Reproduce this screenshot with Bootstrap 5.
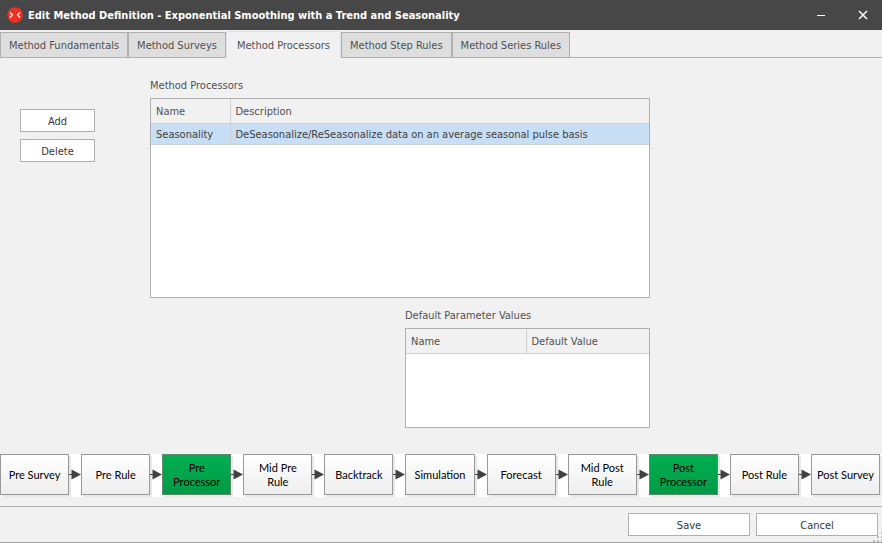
<!DOCTYPE html>
<html lang="en">
<head>
<meta charset="utf-8">
<meta name="viewport" content="width=device-width, initial-scale=1">
<title>Edit Method Definition</title>
<link href="https://cdn.jsdelivr.net/npm/bootstrap@5.3.0/dist/css/bootstrap.min.css" rel="stylesheet">
<style>
  :root { --line: #b0b0b0; --soft-line: #d0d0d0; --surface: #f1f1f1; }
  body { font: 11px/16px "DejaVu Sans Condensed", "DejaVu Sans", sans-serif; color: #505050; background: var(--surface); }
  .title-bar { background: #474747; color: #fff; height: 30px; padding-left: 7px; }
  .title-bar h1 { font-size: 11px; line-height: 16px; font-weight: 700; padding: 2px 0 0 5px; }
  .win-buttons { gap: 4px; }
  .win-btn { width: 38px; height: 30px; background: none; color: #fff; }
  .nav-tabs.method-tabs { --bs-nav-tabs-border-width: 0; padding-top: 1px; box-shadow: inset 0 -1px var(--line); }
  .method-tabs .nav-link { padding: 2px 8px 0; height: 26px; font-size: 11px; line-height: 16px; color: #505050; background: #dedede; border: 1px solid var(--line); border-radius: 0; margin: 0; }
  .method-tabs .nav-link.active { padding: 2px 10px 0; height: 27px; background: var(--surface); border-bottom-color: var(--surface); color: #505050; }
  .side-actions { width: 150px; padding: 31px 55px 0 20px; gap: 7px; }
  .flat-btn { height: 23px; padding: 2px 0 0; font-size: 11px; line-height: 16px; background: #fff; border: 1px solid var(--line); border-radius: 0; color: #383838; }
  .flat-btn:hover { background: #e8f1fa; }
  .work-area { padding-top: 20px; padding-bottom: 26px; }
  .grids { max-width: 500px; }
  .grid-title { font-size: 11px; line-height: 16px; font-weight: 400; margin-bottom: 4px; }
  .grid-box { background: #fff; border: 1px solid var(--line); height: 200px; }
  .grid-box.short { height: 100px; }
  .param-block { width: 245px; margin-top: 10px; }
  .data-grid { table-layout: fixed; --bs-table-color: #505050; --bs-table-bg: transparent; }
  .data-grid th, .data-grid td { font-weight: 400; padding: 2px 5px 0; border-bottom: 1px solid var(--soft-line); color: #505050; }
  .data-grid th { height: 24px; background: var(--surface); }
  .data-grid td { height: 21px; background: #c8def5; color: #404040; }
  .data-grid tr > :first-child { border-right: 1px solid var(--soft-line); }
  .name-col { width: 79px; }
  .param-col { width: 120px; }
  .flow-strip { background: #fff; height: 43px; padding-right: 2px; font: 11px/14px Lato, sans-serif; color: #000; }
  .flow-step { flex: 1 1 0; min-width: 0; height: 41px; border: 1px solid #999; background: linear-gradient(#fff, #eee); box-shadow: 2px 2px 0 #e8e8e8; }
  .flow-step.on { background: linear-gradient(#00b050, #009a46); border-color: #5f8a6e; }
  .flow-arrow { width: 12px; height: 41px; flex: none; position: relative; }
  .footer-bar { margin-top: 9px; border-top: 1px solid var(--line); border-bottom: 1px solid #a0a0a0; padding: 6px 4px 6px 0; gap: 6px; position: relative; }
  .footer-bar .flat-btn { width: 122px; }
  .grip { position: absolute; right: 0; bottom: 0; }
</style>
</head>
<body class="d-flex flex-column min-vh-100">
<header class="title-bar d-flex align-items-center">
  <svg width="16" height="16" viewBox="0 0 16 16" aria-hidden="true"><circle cx="8" cy="8" r="7.8" fill="#ee3124"/><path d="M3 5.500 5.500 8 3 10.500M13 5.500 10.500 8 13 10.500" fill="none" stroke="#fff" stroke-width="1.200"/></svg>
  <h1 class="m-0 flex-grow-1 text-truncate">Edit Method Definition - Exponential Smoothing with a Trend and Seasonality</h1>
  <div class="win-buttons d-flex">
    <button type="button" class="win-btn border-0 p-0 d-flex align-items-center justify-content-center" aria-label="Minimize"><svg width="8" height="8" viewBox="0 0 8 8"><path d="M0 4.500H8" stroke="#fff"/></svg></button>
    <button type="button" class="win-btn border-0 p-0 d-flex align-items-center justify-content-center" aria-label="Close"><svg width="10" height="10" viewBox="0 0 10 10"><path d="M1 1 9 9M9 1 1 9" stroke="#fff" stroke-width="1.500"/></svg></button>
  </div>
</header>
<nav class="nav nav-tabs method-tabs align-items-end" aria-label="Method sections">
  <a class="nav-link d-flex align-items-center" href="#fundamentals">Method Fundamentals</a>
  <a class="nav-link d-flex align-items-center" href="#surveys">Method Surveys</a>
  <a class="nav-link active d-flex align-items-center" href="#processors" aria-current="page">Method Processors</a>
  <a class="nav-link d-flex align-items-center" href="#steps">Method Step Rules</a>
  <a class="nav-link d-flex align-items-center" href="#series">Method Series Rules</a>
</nav>
<main class="flex-grow-1 d-flex flex-column" id="processors">
  <div class="work-area d-flex flex-grow-1">
    <div class="side-actions d-flex flex-column flex-shrink-0">
      <button type="button" class="btn flat-btn">Add</button>
      <button type="button" class="btn flat-btn">Delete</button>
    </div>
    <div class="grids flex-grow-1">
      <h2 class="grid-title" id="proc-title">Method Processors</h2>
      <div class="grid-box">
        <table class="table data-grid m-0" aria-labelledby="proc-title">
          <thead><tr><th class="name-col align-middle" scope="col">Name</th><th class="align-middle" scope="col">Description</th></tr></thead>
          <tbody><tr><td class="align-middle">Seasonality</td><td class="align-middle">DeSeasonalize/ReSeasonalize data on an average seasonal pulse basis</td></tr></tbody>
        </table>
      </div>
      <div class="param-block ms-auto">
        <h2 class="grid-title" id="param-title">Default Parameter Values</h2>
        <div class="grid-box short">
          <table class="table data-grid m-0" aria-labelledby="param-title">
            <thead><tr><th class="param-col align-middle" scope="col">Name</th><th class="align-middle" scope="col">Default Value</th></tr></thead>
          </table>
        </div>
      </div>
    </div>
  </div>
  <svg class="d-none"><symbol id="arrow" viewBox="0 0 12 41"><path d="M0 20.500H5" stroke="#404040"/><path d="M2.500 15.500 12 20.500 2.500 25.500Z" fill="#404040"/></symbol></svg>
  <div class="flow-strip d-flex text-center">
    <div class="flow-step d-flex align-items-center justify-content-center">Pre Survey</div>
    <svg class="flow-arrow"><use href="#arrow"/></svg>
    <div class="flow-step d-flex align-items-center justify-content-center">Pre Rule</div>
    <svg class="flow-arrow"><use href="#arrow"/></svg>
    <div class="flow-step on d-flex align-items-center justify-content-center">Pre<br>Processor</div>
    <svg class="flow-arrow"><use href="#arrow"/></svg>
    <div class="flow-step d-flex align-items-center justify-content-center">Mid Pre<br>Rule</div>
    <svg class="flow-arrow"><use href="#arrow"/></svg>
    <div class="flow-step d-flex align-items-center justify-content-center">Backtrack</div>
    <svg class="flow-arrow"><use href="#arrow"/></svg>
    <div class="flow-step d-flex align-items-center justify-content-center">Simulation</div>
    <svg class="flow-arrow"><use href="#arrow"/></svg>
    <div class="flow-step d-flex align-items-center justify-content-center">Forecast</div>
    <svg class="flow-arrow"><use href="#arrow"/></svg>
    <div class="flow-step d-flex align-items-center justify-content-center">Mid Post<br>Rule</div>
    <svg class="flow-arrow"><use href="#arrow"/></svg>
    <div class="flow-step on d-flex align-items-center justify-content-center">Post<br>Processor</div>
    <svg class="flow-arrow"><use href="#arrow"/></svg>
    <div class="flow-step d-flex align-items-center justify-content-center">Post Rule</div>
    <svg class="flow-arrow"><use href="#arrow"/></svg>
    <div class="flow-step d-flex align-items-center justify-content-center">Post Survey</div>
  </div>
</main>
<footer class="footer-bar d-flex justify-content-end">
  <button type="button" class="btn flat-btn">Save</button>
  <button type="button" class="btn flat-btn">Cancel</button>
  <svg class="grip" width="9" height="10" viewBox="0 0 9 10" fill="#bcbcbc" aria-hidden="true"><path d="M8 0h2v2h-2zM4 4h2v2h-2zM8 4h2v2h-2zM0 8h2v2h-2zM4 8h2v2h-2zM8 8h2v2h-2z"/></svg>
</footer>
<script src="https://cdn.jsdelivr.net/npm/bootstrap@5.3.0/dist/js/bootstrap.bundle.min.js"></script>
</body>
</html>
